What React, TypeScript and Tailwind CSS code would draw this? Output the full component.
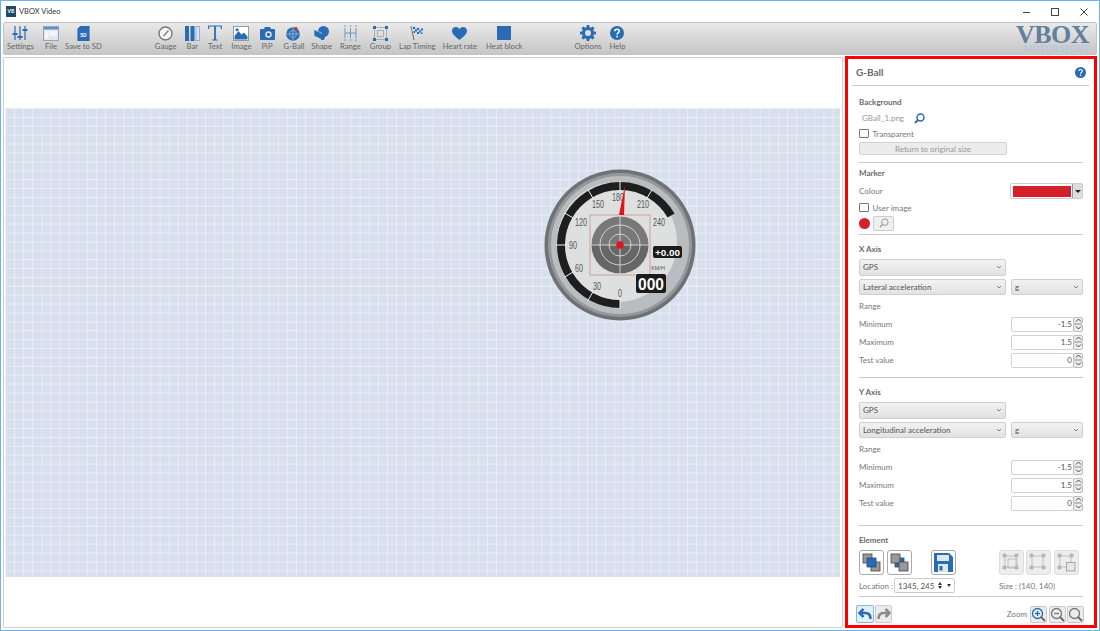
import React from "react";

const blue = "#2a6cb3";

function Divider({ className = "" }: { className?: string }) {
  return <div className={`h-[1px] bg-[#c9c9c9] ${className}`} />;
}

function ToolItem({ label, className = "", children }: { label: string; className?: string; children: React.ReactNode }) {
  return (
    <div className={`flex flex-col items-center px-[4px] ${className}`}>
      <div className="flex h-[16px] w-0 items-center justify-center">
        <div className="shrink-0">{children}</div>
      </div>
      <span className="whitespace-nowrap text-[7.7px] leading-[11px] text-[#666]">{label}</span>
    </div>
  );
}

function HelpIcon({ size }: { size: number }) {
  return (
    <svg width={size} height={size} viewBox="0 0 14 14">
      <circle cx="7" cy="7" r="7" fill={blue} />
      <path d="M4.7 5.3C4.8 3.9 5.8 3.2 7 3.2c1.3 0 2.3.8 2.3 1.9 0 1.7-2.2 1.7-2.2 3.4" fill="none" stroke="#fff" strokeWidth="1.5" />
      <circle cx="7.1" cy="10.5" r="0.9" fill="#fff" />
    </svg>
  );
}

function Toolbar() {
  return (
    <div className="flex h-[33px] shrink-0 items-start rounded-[2px] border border-[#c4c4c4] bg-gradient-to-b from-[#e9e9e9] to-[#c6c6c6] pt-[2px]">
      <ToolItem label="Settings" className="ml-[-1px]">
        <svg width="16" height="16" viewBox="0 0 16 16" fill="none" stroke={blue} strokeWidth="1.2">
          <path d="M3 1v14M8 1v14M13 1v14" />
          <path d="M0.5 9h5M5.5 12h5M10.5 5h5" strokeWidth="2" />
        </svg>
      </ToolItem>
      <ToolItem label="File" className="ml-[3px]">
        <svg width="16" height="15" viewBox="0 0 16 15">
          <rect x="0.5" y="0.5" width="15" height="14" fill="#dfe6ee" stroke="#8fa6bd" />
          <rect x="1" y="1" width="14" height="2.5" fill="#5c93c9" />
          <rect x="2" y="5" width="3.5" height="8" fill="#f5f5f5" />
          <rect x="6.5" y="5" width="7.5" height="5" fill="#f5f5f5" />
        </svg>
      </ToolItem>
      <ToolItem label="Save to SD">
        <svg width="13" height="15" viewBox="0 0 13 16">
          <path d="M3 0h10v16H0V3z" fill={blue} />
          <text x="6.5" y="11.5" textAnchor="middle" fontSize="5" fontWeight="700" fill="#fff" fontFamily="Liberation Sans, sans-serif">SD</text>
        </svg>
      </ToolItem>
      <ToolItem label="Gauge" className="ml-[45px]">
        <svg width="15" height="15" viewBox="0 0 15 15" fill="none">
          <circle cx="7.5" cy="7.5" r="6.5" fill="#f7f7f7" stroke="#777" strokeWidth="1.4" />
          <path d="M5.5 10 10.5 4.5" stroke="#777" strokeWidth="1.2" />
        </svg>
      </ToolItem>
      <ToolItem label="Bar" className="ml-[2px]">
        <svg width="15" height="15" viewBox="0 0 15 15">
          <rect x="0" y="0" width="4" height="15" fill={blue} />
          <rect x="5.5" y="0" width="4" height="15" fill={blue} />
          <rect x="11" y="0.5" width="3.5" height="14" fill="#dbe5ef" stroke="#8fb0d2" />
        </svg>
      </ToolItem>
      <ToolItem label="Text" className="ml-[2px]">
        <svg width="14" height="16" viewBox="0 0 14 16" fill="none" stroke={blue}>
          <path d="M0.7 4V1h12.6v3" strokeWidth="1.2" />
          <path d="M7 1v14" strokeWidth="1.8" />
          <path d="M4.5 15h5" strokeWidth="1.1" />
        </svg>
      </ToolItem>
      <ToolItem label="Image" className="ml-[1px]">
        <svg width="16" height="15" viewBox="0 0 16 15">
          <rect x="0.5" y="0.5" width="15" height="14" fill="#fff" stroke="#999" />
          <path d="M1.5 13.5V10l4-5 3 3.5 2.5-2 3.5 4v3z" fill={blue} />
          <circle cx="4" cy="3.8" r="1.5" fill={blue} />
        </svg>
      </ToolItem>
      <ToolItem label="PiP" className="ml-[2px]">
        <svg width="15" height="13" viewBox="0 0 15 13">
          <path d="M1 2h3l1-2h5l1 2h3a1 1 0 0 1 1 1v9a1 1 0 0 1-1 1H1a1 1 0 0 1-1-1V3a1 1 0 0 1 1-1z" fill={blue} />
          <circle cx="8.5" cy="7.5" r="3.2" fill="#e4ecf4" />
          <circle cx="8.5" cy="7.5" r="1.8" fill={blue} />
        </svg>
      </ToolItem>
      <ToolItem label="G-Ball" className="ml-[3px]">
        <svg width="15" height="15" viewBox="0 0 15 15" fill="none">
          <circle cx="7" cy="8" r="6.8" fill={blue} />
          <circle cx="7" cy="8" r="3.5" stroke="#a9c4df" strokeWidth="0.7" />
          <path d="M7 1.5v13M0.5 8h13" stroke="#a9c4df" strokeWidth="0.7" />
          <circle cx="9.8" cy="2.5" r="1.7" fill="#e0303a" />
        </svg>
      </ToolItem>
      <ToolItem label="Shape" className="ml-[-1px]">
        <svg width="15" height="15" viewBox="0 0 15 15">
          <circle cx="9.5" cy="5.5" r="5.5" fill={blue} />
          <path d="M0 3.5 7.5 7v6.5L0 10z" fill={blue} stroke="#dfe6ee" strokeWidth="0.6" />
          <path d="M7 8h5l-2 6H7z" fill={blue} />
        </svg>
      </ToolItem>
      <ToolItem label="Range">
        <svg width="15" height="16" viewBox="0 0 15 16" fill="none" stroke="#6f97c2" strokeWidth="1">
          <path d="M2 3v10M7.5 3v10M13 3v10M2 8h11" />
          <path d="M1 1h2M6.5 1h2M12 1h2M1 15h2M6.5 15h2M12 15h2" />
        </svg>
      </ToolItem>
      <ToolItem label="Group" className="ml-[1px]">
        <svg width="15" height="15" viewBox="0 0 15 15" fill="none">
          <rect x="1.5" y="1.5" width="12" height="12" stroke="#9a9a9a" strokeWidth="0.7" />
          <rect x="4.5" y="4.5" width="6" height="6" stroke="#9a9a9a" strokeWidth="0.7" />
          <path d="M0 0h3v3H0zM12 0h3v3h-3zM0 12h3v3H0zM12 12h3v3h-3z" fill={blue} />
        </svg>
      </ToolItem>
      <ToolItem label="Lap Timing">
        <svg width="14" height="16" viewBox="0 0 14 16">
          <path d="M1 1 4 15" stroke="#666" strokeWidth="1" />
          <path d="M1.5 1.5C5 0 8 4 13.5 3l-1 6C8 10 6 7 3 8z" fill="#c9d9ea" />
          <path d="M3 2h2v2H3zM7 3h2v2H7zM11 3.5h2v2h-2zM5 4.500h2v2H5zM9 5.500h2v2H9zM3.500 6h1.500v2H3.500zM7 7h2v2H7zM11 7.500h1.500v1.500H11z" fill={blue} />
        </svg>
      </ToolItem>
      <ToolItem label="Heart rate" className="ml-[-1px]">
        <svg width="15" height="13" viewBox="0 0 15 13">
          <path d="M7.5 13C3 9.5 0 7 0 3.8 0 1.5 1.8 0 3.8 0c1.6 0 3 .9 3.7 2.2C8.2.9 9.6 0 11.2 0 13.2 0 15 1.5 15 3.8 15 7 12 9.5 7.5 13z" fill={blue} />
        </svg>
      </ToolItem>
      <ToolItem label="Heat block" className="ml-[1px]">
        <div className="h-[14px] w-[14px] bg-[#2a6cb3]" />
      </ToolItem>
      <ToolItem label="Options" className="ml-[44px]">
        <svg width="16" height="16" viewBox="0 0 16 16">
          <path d="M6.8 0h2.400l.4 2.200 1.300.5 1.800-1.300 1.900 1.900-1.300 1.800.5 1.300 2.200.4v2.400l-2.200.4-.5 1.300 1.300 1.800-1.900 1.900-1.800-1.300-1.300.5-.4 2.200H6.800l-.4-2.200-1.300-.5-1.800 1.300-1.900-1.900 1.300-1.800-.5-1.300L0 9.200V6.800l2.200-.4.5-1.300-1.300-1.800 1.900-1.900 1.800 1.300 1.300-.5z" fill={blue} />
          <circle cx="8" cy="8" r="3" fill="#dfdfdf" />
        </svg>
      </ToolItem>
      <ToolItem label="Help">
        <HelpIcon size={14} />
      </ToolItem>
      <div className="ml-auto mr-[7px] flex flex-col items-end">
        <span className="font-['Liberation_Serif',serif] text-[26px] font-bold leading-[20px] tracking-[-0.5px] text-[#627f9b]">VBOX</span>
        <span className="font-['Liberation_Serif',serif] text-[9.5px] leading-[8px] tracking-[0.2px] text-[#a9c7e0]">MOTORSPORT</span>
      </div>
    </div>
  );
}

function Gauge() {
  const c = 76;
  const polar = (deg: number, r: number) => {
    const a = ((deg - 90) * Math.PI) / 180;
    return [c + r * Math.cos(a), c + r * Math.sin(a)];
  };
  const [sx, sy] = polar(180, 59);
  const [ex, ey] = polar(60, 59);
  const ticks = [180, 210, 240, 270, 300, 330, 0, 30];
  const nums: [string, number, number][] = [
    ["0", 0, 48], ["30", -23, 41], ["60", -41, 23], ["90", -47, 0], ["120", -39, -23],
    ["150", -22, -41], ["180", -2, -48], ["210", 23, -41], ["240", 39, -23],
  ];
  return (
    <svg width="152" height="152" viewBox="0 0 152 152" className="absolute left-[539px] top-[61px]" fontFamily="Liberation Sans, sans-serif">
      <circle cx={c} cy={c} r="75.5" fill="#6f7274" />
      <circle cx={c} cy={c} r="72" fill="#95989a" />
      <circle cx={c} cy={c} r="69" fill="#b9bdbf" />
      <circle cx={c - 3} cy={c - 3} r="60" fill="#dedfdf" />
      <path d={`M${sx} ${sy}A59 59 0 1 1 ${ex} ${ey}`} fill="none" stroke="#1e1e1e" strokeWidth="8" />
      {ticks.map((t) => {
        const [x1, y1] = polar(t, 54);
        const [x2, y2] = polar(t, 64);
        return <line key={t} x1={x1} y1={y1} x2={x2} y2={y2} stroke="#f2f2f2" strokeWidth="1" />;
      })}
      {nums.map(([n, dx, dy]) => (
        <text key={n} x={c + dx} y={c + dy + 4} textAnchor="middle" fontSize="11" fill="#555" textLength={n.length * 4} lengthAdjust="spacingAndGlyphs">{n}</text>
      ))}
      <rect x={c - 30} y={c - 30} width="60" height="60" fill="#dedfdf" stroke="#c98f8f" strokeWidth="0.8" />
      <path d={`M${c - 29} ${c}A29 29 0 0 1 ${c + 29} ${c}z`} fill="#787878" />
      <path d={`M${c - 29} ${c}A29 29 0 0 0 ${c + 29} ${c}z`} fill="#666" />
      <g fill="none" stroke="#e8e8e8" strokeWidth="0.8">
        <circle cx={c} cy={c} r="29" />
        <circle cx={c} cy={c} r="20" />
        <circle cx={c} cy={c} r="11" />
        <path d={`M${c} ${c - 29}V${c + 29}M${c - 29} ${c}H${c + 29}`} />
      </g>
      <polygon points={`${c + 5},${c - 60} ${c + 4},${c - 30} ${c - 1},${c - 30}`} fill="#e0141e" />
      <circle cx={c} cy={c} r="3.8" fill="#e0141e" />
      <rect x={c + 33} y={c + 1} width="29" height="12" rx="2" fill="#1c1c1c" />
      <text x={c + 47.5} y={c + 10.5} textAnchor="middle" fontSize="9.5" fontWeight="700" fill="#fff" textLength="25" lengthAdjust="spacingAndGlyphs">+0.00</text>
      <text x={c + 38} y={c + 25} textAnchor="middle" fontSize="5.5" fill="#555">KM/H</text>
      <rect x={c + 16} y={c + 29} width="30" height="19" rx="2" fill="#1c1c1c" />
      <text x={c + 31} y={c + 44.5} textAnchor="middle" fontSize="17" fontWeight="700" fill="#fff" textLength="26" lengthAdjust="spacingAndGlyphs">000</text>
    </svg>
  );
}

function Canvas() {
  return (
    <div className="mt-[1px] h-[571px] w-[840px] shrink-0 rounded-[2px] border border-[#d0d0d0] bg-white pl-[1px] pt-[50px]">
      <div className="relative h-[469px] w-[835px] bg-[#d8e0ee] bg-[linear-gradient(to_right,#e9eef6_1px,transparent_1px),linear-gradient(to_bottom,#e9eef6_1px,transparent_1px)] bg-[size:9.1px_8.9px]">
        <Gauge />
      </div>
    </div>
  );
}

function Heading({ className, children }: { className: string; children: React.ReactNode }) {
  return <div className={`h-[16px] text-[8px] font-bold leading-[16px] text-[#6a6a6a] ${className}`}>{children}</div>;
}

function Check({ label }: { label: string }) {
  return (
    <div className="flex h-[15px] items-center">
      <div className="h-[9.5px] w-[9.5px] rounded-[1px] border border-[#777] bg-white" />
      <span className="ml-[4px] text-[8px] text-[#777]">{label}</span>
    </div>
  );
}

function Select({ label, className }: { label: string; className: string }) {
  return (
    <div className={`flex h-[16.5px] items-center justify-between rounded-[2px] border border-[#cfcfcf] bg-gradient-to-b from-[#f2f2f2] to-[#e2e2e2] px-[3px] ${className}`}>
      <span className="whitespace-nowrap text-[8px] text-[#555]">{label}</span>
      <svg width="6" height="4" viewBox="0 0 6 4" fill="none" stroke="#666" strokeWidth="0.8"><path d="M1 1l2 2 2-2" /></svg>
    </div>
  );
}

function NumberRow({ label, value }: { label: string; value: string }) {
  return (
    <div className="flex h-[18px] items-center justify-between">
      <span className="text-[8px] text-[#777]">{label}</span>
      <div className="flex items-center">
        <div className="flex h-[15px] w-[63px] items-center justify-end rounded-[2px] border border-[#d2d2d2] bg-white pr-[1px] text-[8px] text-[#555]">{value}</div>
        <div className="ml-[-1px] flex flex-col">
          {[0, 1].map((i) => (
            <div key={i} className="flex h-[7.5px] w-[10px] items-center justify-center rounded-[2px] border border-[#bbb] bg-[#eee]">
              <svg width="7" height="4" viewBox="0 0 7 4" fill="none" stroke="#444" strokeWidth="1">
                <path d={i === 0 ? "M1 3.5 3.5 1 6 3.5" : "M1 .5 3.5 3 6 .5"} />
              </svg>
            </div>
          ))}
        </div>
      </div>
    </div>
  );
}

function Axis({ title, quantity }: { title: string; quantity: string }) {
  return (
    <>
      <Heading className="mt-[6px]">{title}</Heading>
      <Select label="GPS" className="mt-[2px] w-[147px]" />
      <div className="mt-[3px] flex justify-between">
        <Select label={quantity} className="w-[147px]" />
        <Select label="g" className="w-[72px]" />
      </div>
      <div className="mt-[3px] h-[16px] text-[8px] leading-[16px] text-[#777]">Range</div>
      <div className="mt-[1px]">
        <NumberRow label="Minimum" value="-1.5" />
        <NumberRow label="Maximum" value="1.5" />
        <NumberRow label="Test value" value="0" />
      </div>
    </>
  );
}

function ActionButton({ disabled, children }: { disabled?: boolean; children: React.ReactNode }) {
  return (
    <div className={`flex h-[25px] w-[25px] items-center justify-center rounded-[3px] border ${disabled ? "border-[#ddd] bg-[#ededed]" : "border-[#aaa] bg-white"}`}>
      {children}
    </div>
  );
}

function LayerIcon({ blueOnTop }: { blueOnTop: boolean }) {
  const grey = (x: number, y: number) => <rect x={x} y={y} width="9" height="9" fill="#999" stroke="#444" strokeWidth="0.8" />;
  const mid = <rect x="5" y="5" width="9" height="9" fill={blue} stroke="#1d4d80" strokeWidth="0.8" />;
  return (
    <svg width="19" height="19" viewBox="0 0 19 19">
      {blueOnTop ? <>{grey(1, 1)}{grey(9, 9)}{mid}</> : <>{mid}{grey(1, 1)}{grey(9, 9)}</>}
    </svg>
  );
}

function SizeIcon({ variant }: { variant: "inner" | "plain" | "save" }) {
  return (
    <svg width="19" height="19" viewBox="0 0 19 19" fill="none" stroke="#b5b5b5" strokeWidth="0.8">
      <rect x="3" y="3" width="11" height="11" />
      {variant === "inner" && <rect x="6" y="6" width="9" height="9" />}
      <path d="M1 1h3v3H1zM13 1h3v3h-3zM1 13h3v3H1zM13 13h3v3h-3z" fill="#b5b5b5" />
      {variant === "save" && <rect x="9.5" y="9.5" width="8.5" height="8.5" fill="#e6e6e6" stroke="#999" />}
    </svg>
  );
}

function ZoomButton({ sign }: { sign: string }) {
  return (
    <div className="flex h-[17px] w-[17px] items-center justify-center rounded-[2px] border border-[#c8c8c8] bg-[#ececec]">
      <svg width="15" height="15" viewBox="0 0 15 15" fill="none" stroke={sign === "+" ? blue : "#777"} strokeWidth="1.3">
        <circle cx="6.5" cy="6.5" r="5" />
        <path d="M10 10l4 4" strokeWidth="1.8" stroke="#666" />
        {sign !== "o" && <path d="M4 6.5h5" />}
        {sign === "+" && <path d="M6.5 4v5" />}
      </svg>
    </div>
  );
}

function Panel() {
  return (
    <div className="h-[572px] w-[252px] shrink-0 border-[3px] border-[#ff0000] bg-white pl-[4px] pr-[5px]">
      <div className="flex h-[26px] items-center justify-between pl-[4px] pr-[3px]">
        <span className="text-[10px] font-bold text-[#6a6a6a]">G-Ball</span>
        <HelpIcon size={11} />
      </div>
      <Divider />
      <div className="pl-[7px] pr-[6px]">
        <Heading className="mt-[8px]">Background</Heading>
        <div className="flex h-[16px] items-center pl-[3px]">
          <span className="text-[8px] text-[#999]">GBall_1.png</span>
          <svg className="ml-[10px]" width="11" height="11" viewBox="0 0 11 11" fill="none" stroke={blue} strokeWidth="1.5">
            <circle cx="6.5" cy="4.5" r="3.5" />
            <path d="M4 7 1 10" strokeWidth="2" />
          </svg>
        </div>
        <Check label="Transparent" />
        <div className="mt-[1px] flex h-[13px] w-[148px] items-center justify-center rounded-[2px] border border-[#d2d2d2] bg-[#ececec] text-[8px] text-[#999]">Return to original size</div>
        <Divider className="mt-[7px]" />
        <Heading className="mt-[2px]">Marker</Heading>
        <div className="mt-[1px] flex h-[18px] items-center justify-between">
          <span className="text-[8px] text-[#777]">Colour</span>
          <div className="flex h-[16px] w-[73px] items-stretch rounded-[2px] border border-[#ccc] bg-white">
            <div className="m-[1.5px] flex-1 bg-[#d4202a]" />
            <div className="flex w-[10px] items-center justify-center border-l border-[#999] bg-[#ddd]">
              <div className="h-0 w-0 border-x-[3px] border-t-[3px] border-x-transparent border-t-[#222]" />
            </div>
          </div>
        </div>
        <Check label="User image" />
        <div className="flex h-[16px] items-center">
          <div className="h-[11px] w-[11px] rounded-full bg-[#d4202a]" />
          <div className="ml-[3px] flex h-[15px] w-[21px] items-center justify-center rounded-[2px] border border-[#ccc] bg-[#efefef]">
            <svg width="10" height="10" viewBox="0 0 11 11" fill="none" stroke="#888" strokeWidth="0.9">
              <circle cx="6.5" cy="4.5" r="3.5" />
              <path d="M4 7 1 10" strokeWidth="1.3" />
            </svg>
          </div>
        </div>
        <Divider className="mt-[3px]" />
        <Axis title="X Axis" quantity="Lateral acceleration" />
        <Divider className="mt-[8px]" />
        <Axis title="Y Axis" quantity="Longitudinal acceleration" />
        <Divider className="mt-[13px]" />
        <Heading className="mt-[6px]">Element</Heading>
        <div className="mt-[2px] flex">
          <ActionButton><LayerIcon blueOnTop /></ActionButton>
          <div className="ml-[3px]"><ActionButton><LayerIcon blueOnTop={false} /></ActionButton></div>
          <div className="ml-[19px]">
            <ActionButton>
              <svg width="19" height="19" viewBox="0 0 19 19">
                <path d="M0 0h15l4 4v15H0z" fill={blue} />
                <rect x="3" y="2" width="12" height="6" fill="#dce7f2" />
                <rect x="4" y="11" width="10" height="8" fill="#dce7f2" />
                <rect x="5.5" y="13" width="3" height="4.5" fill={blue} />
              </svg>
            </ActionButton>
          </div>
          <div className="ml-[43px]"><ActionButton disabled><SizeIcon variant="inner" /></ActionButton></div>
          <div className="ml-[2px]"><ActionButton disabled><SizeIcon variant="plain" /></ActionButton></div>
          <div className="ml-[3px]"><ActionButton disabled><SizeIcon variant="save" /></ActionButton></div>
        </div>
        <div className="mt-[3px] flex h-[15px] items-center">
          <span className="w-[35px] whitespace-nowrap text-[8px] text-[#777]">Location :</span>
          <div className="flex h-[15px] w-[61px] items-center rounded-[2px] border border-[#ccc] bg-white pl-[3px] text-[8px] text-[#555]">
            <span className="flex-1">1345, 245</span>
            <div className="mr-[5px] flex flex-col gap-[1px]">
              <div className="h-0 w-0 border-x-[2.5px] border-b-[3px] border-x-transparent border-b-[#333]" />
              <div className="h-0 w-0 border-x-[2.5px] border-t-[3px] border-x-transparent border-t-[#333]" />
            </div>
            <div className="mr-[3px] h-0 w-0 border-x-[2.5px] border-t-[3px] border-x-transparent border-t-[#333]" />
          </div>
          <span className="ml-[44px] text-[8px] text-[#777]">Size : (140, 140)</span>
        </div>
        <Divider className="mt-[3px]" />
      </div>
      <div className="mt-[8px] flex items-center pl-[4px] pr-[5px]">
        <div className="flex h-[18px] w-[18px] items-center justify-center rounded-[2px] border border-[#8bb6dc] bg-[#e5eff8]">
          <svg width="14" height="12" viewBox="0 0 14 12" fill="none" stroke={blue} strokeWidth="2.5">
            <path d="M12.5 11c0-4-2-6-5-6H2" />
            <path d="M5.5 1 1.5 5l4 4" />
          </svg>
        </div>
        <div className="ml-[1px] flex h-[18px] w-[17px] items-center justify-center rounded-[2px] border border-[#ccc] bg-[#ececec]">
          <svg width="14" height="12" viewBox="0 0 14 12" fill="none" stroke="#8a8a8a" strokeWidth="2.5">
            <path d="M1.5 11c0-4 2-6 5-6H12" />
            <path d="M8.5 1l4 4-4 4" />
          </svg>
        </div>
        <span className="ml-auto mr-[3px] text-[8px] text-[#777]">Zoom</span>
        <div className="flex gap-[1.5px]">
          <ZoomButton sign="+" />
          <ZoomButton sign="-" />
          <ZoomButton sign="o" />
        </div>
      </div>
    </div>
  );
}

export default function App() {
  return (
    <div className="flex h-[631px] w-[1100px] flex-col overflow-hidden border border-[#6fb2e8] bg-white font-['Lato',sans-serif]">
      <div className="flex h-[21px] shrink-0 items-center pl-[5px]">
        <div className="flex h-[11px] w-[10px] items-center justify-center bg-[#1f4a68] text-[5px] font-bold leading-none text-white">VB</div>
        <span className="ml-[3px] text-[7.5px] text-[#333]">VBOX Video</span>
        <div className="ml-auto flex items-center">
          <svg className="mr-[19px]" width="10" height="10" viewBox="0 0 10 10" stroke="#444"><path d="M2 5.5h7" /></svg>
          <svg className="mr-[19px]" width="10" height="10" viewBox="0 0 10 10" stroke="#444" fill="none"><rect x="1.5" y="1.5" width="7" height="7" /></svg>
          <svg className="mr-[10px]" width="10" height="10" viewBox="0 0 10 10" stroke="#444"><path d="M1.5 1.5l7 7M8.5 1.5l-7 7" /></svg>
        </div>
      </div>
      <div className="flex min-h-0 flex-1 flex-col px-[2px]">
        <Toolbar />
        <div className="mt-[1px] flex gap-[2px]">
          <Canvas />
          <Panel />
        </div>
      </div>
    </div>
  );
}
